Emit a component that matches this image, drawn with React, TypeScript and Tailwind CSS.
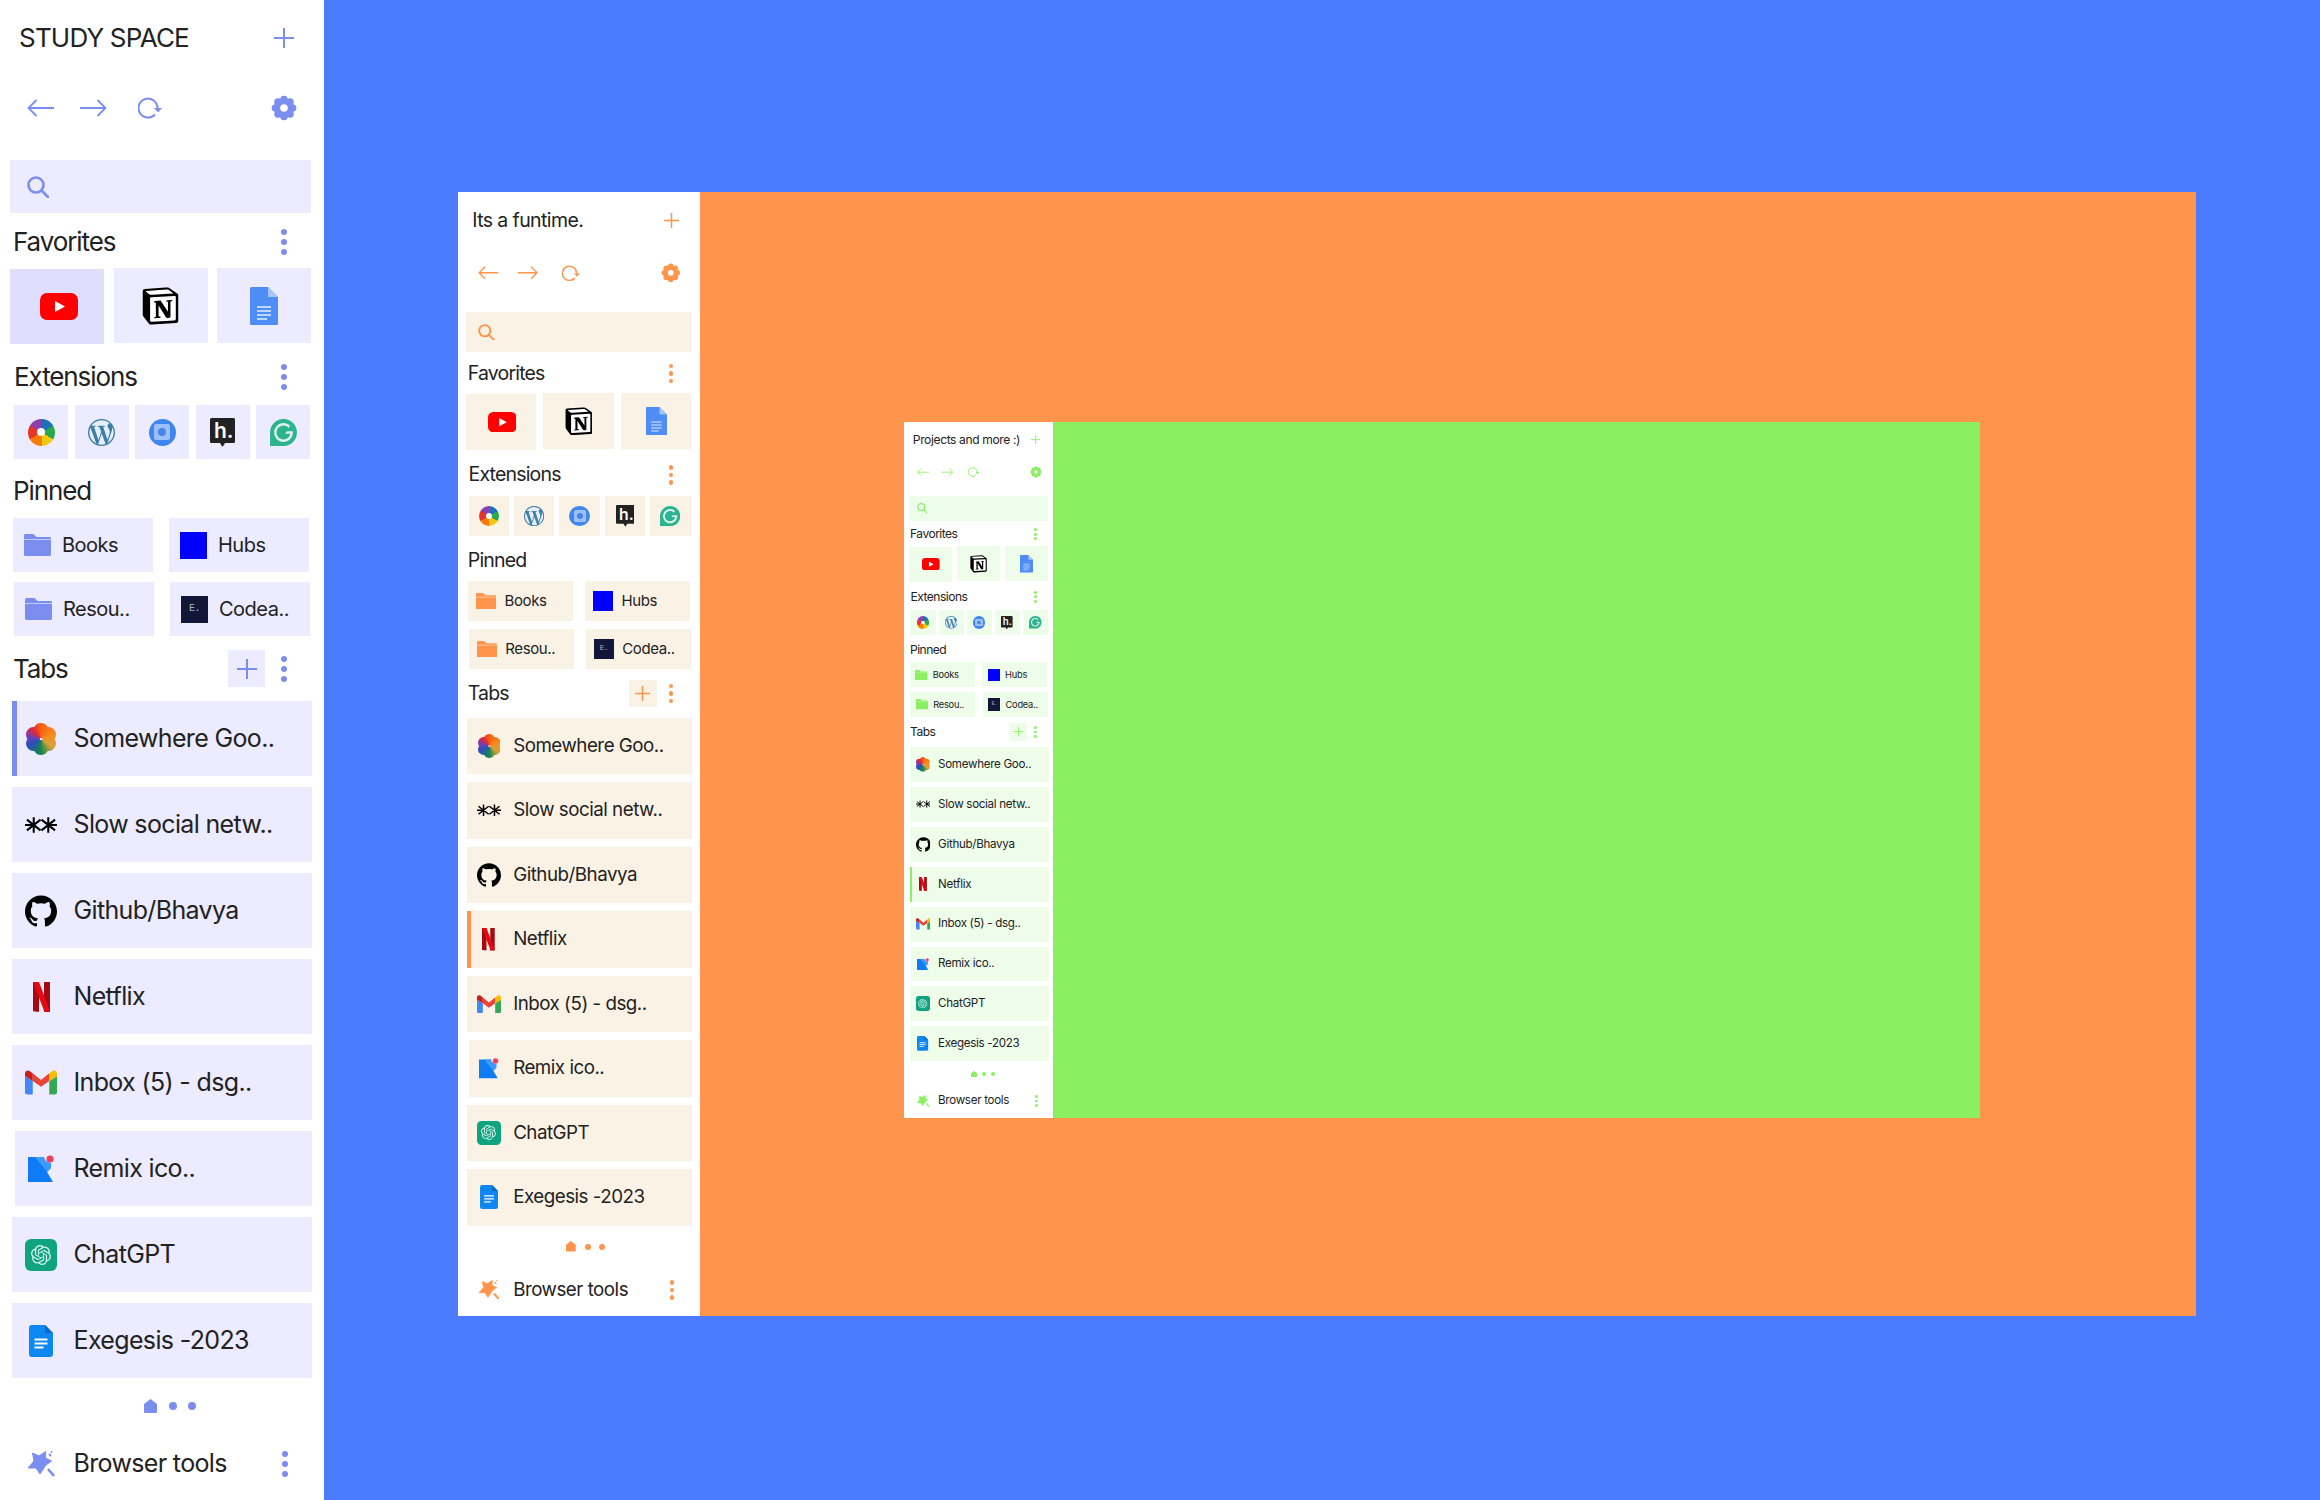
import React from "react";
import { SiGithub, SiGrammarly, SiOpenai, SiWordpress } from "react-icons/si";

type Theme = { accent: string; bar: string; tile: string; activeFav: string };

const blue: Theme = { accent: "text-[#7b8ef0]", bar: "bg-[#7b8ef0]", tile: "bg-[#ecebff]", activeFav: "bg-[#e0deff]" };
const orange: Theme = { accent: "text-[#ff954d]", bar: "bg-[#ff954d]", tile: "bg-[#fbf2e6]", activeFav: "bg-[#fbf2e6]" };
const green: Theme = { accent: "text-[#8af062]", bar: "bg-[#8af062]", tile: "bg-[#eefcea]", activeFav: "bg-[#eefcea]" };

const Plus = () => (
  <svg width="20" height="20" viewBox="0 0 20 20" fill="none" stroke="currentColor" strokeWidth="2">
    <path d="M10 0v20M0 10h20" />
  </svg>
);

const ArrowLeft = () => (
  <svg width="27" height="18" viewBox="0 0 27 18" fill="none" stroke="currentColor" strokeWidth="1.8">
    <path d="M27 9H1.5M9.5 1 1.5 9l8 8" />
  </svg>
);

const ArrowRight = () => (
  <svg width="27" height="18" viewBox="0 0 27 18" fill="none" stroke="currentColor" strokeWidth="1.8">
    <path d="M0 9h25.5M17.5 1l8 8-8 8" />
  </svg>
);

const Refresh = () => (
  <svg width="24" height="22" viewBox="0 0 24 22" fill="none" stroke="currentColor" strokeWidth="2">
    <path d="M17 17.5A9.500 9.500 0 1 1 19.500 11" />
    <path d="M16 11h8l-4 4.500z" fill="currentColor" stroke="none" />
  </svg>
);

const Gear = () => (
  <svg width="26" height="26" viewBox="0 0 26 26">
    <g fill="currentColor">
      <circle cx="13" cy="13" r="9.500" />
      <circle cx="13" cy="4.500" r="3.800" />
      <circle cx="13" cy="21.500" r="3.800" />
      <circle cx="4.500" cy="13" r="3.800" />
      <circle cx="21.500" cy="13" r="3.800" />
      <circle cx="7" cy="7" r="3.800" />
      <circle cx="19" cy="7" r="3.800" />
      <circle cx="7" cy="19" r="3.800" />
      <circle cx="19" cy="19" r="3.800" />
    </g>
    <circle cx="13" cy="13" r="3.800" fill="#fff" />
  </svg>
);

const Search = () => (
  <svg width="22" height="22" viewBox="0 0 22 22" fill="none" stroke="currentColor" strokeWidth="2.600">
    <circle cx="9" cy="9" r="7.500" />
    <path d="m14.500 14.500 6.500 6.500" strokeLinecap="round" />
  </svg>
);

const Dots = ({ theme }: { theme: Theme }) => (
  <div className="flex flex-col gap-[4px]">
    <span className={`block w-[6px] h-[6px] rounded-full ${theme.bar}`} />
    <span className={`block w-[6px] h-[6px] rounded-full ${theme.bar}`} />
    <span className={`block w-[6px] h-[6px] rounded-full ${theme.bar}`} />
  </div>
);

const Youtube = () => (
  <svg width="38" height="27" viewBox="0 0 38 27">
    <rect width="38" height="27" rx="7" fill="#ff0000" />
    <path d="M15 8v11l10-5.500z" fill="#fff" />
  </svg>
);

const Notion = () => (
  <svg width="37" height="38" viewBox="0 0 24 24">
    <path d="M2 2 18 1l5 4v17l-17 1-4-5z" fill="#fff" />
    <path
      fill="#000"
      d="M4.459 4.208c.746.606 1.026.56 2.428.466l13.215-.793c.28 0 .047-.28-.046-.326L17.86 1.968c-.42-.326-.981-.7-2.055-.607L3.01 2.295c-.466.046-.56.28-.374.466zm.793 3.08v13.904c0 .747.373 1.027 1.214.98l14.523-.84c.841-.046.935-.56.935-1.167V6.354c0-.606-.233-.933-.748-.887l-15.177.887c-.56.047-.747.327-.747.933zm14.337.745c.093.42 0 .84-.42.888l-.7.14v10.264c-.608.327-1.168.514-1.635.514-.748 0-.935-.234-1.495-.933l-4.577-7.186v6.952L12.21 19s0 .84-1.168.84l-3.222.186c-.093-.186 0-.653.327-.746l.84-.233V9.854L7.822 9.76c-.094-.42.14-1.026.793-1.073l3.456-.233 4.764 7.279v-6.44l-1.215-.139c-.093-.514.28-.887.747-.933zM1.936 1.035l13.31-.98c1.634-.14 2.055-.047 3.082.7l4.249 2.986c.7.513.934.653.934 1.26v16.378c0 1.026-.373 1.634-1.68 1.726l-15.458.934c-.98.047-1.448-.093-1.962-.747l-3.129-4.06c-.56-.747-.793-1.306-.793-1.96V2.667c0-.839.374-1.54 1.447-1.632z"
    />
  </svg>
);

const DocsLight = () => (
  <svg width="28" height="38" viewBox="0 0 28 38">
    <path d="M1.500 0H18l10 10v26.500a1.500 1.500 0 0 1-1.500 1.500h-25A1.500 1.500 0 0 1 0 36.500v-35A1.500 1.500 0 0 1 1.500 0z" fill="#4e8df5" />
    <path d="M18 0l10 10H18z" fill="#a6c5fa" />
    <path d="M7 20h14M7 24h14M7 28h14M7 32h10" stroke="#fff" strokeWidth="1.300" opacity="0.85" />
  </svg>
);

const Wheel = () => (
  <div className="relative w-[27px] h-[27px] rounded-full bg-[conic-gradient(#1d6fb8_0deg_60deg,#2aa84a_60deg_120deg,#f2c811_120deg_180deg,#f57c00_180deg_240deg,#e5352b_240deg_300deg,#8e3fae_300deg_360deg)] flex items-center justify-center">
    <span className="block w-[8px] h-[8px] rounded-full bg-white" />
  </div>
);

const Wordpress = () => (
  <div className="w-[27px] h-[27px] rounded-full bg-[#e8eef8] flex items-center justify-center">
    <SiWordpress size={27} color="#3b7ea6" />
  </div>
);

const BlueExt = () => (
  <div className="w-[27px] h-[27px] rounded-full bg-[#3f86f0] flex items-center justify-center">
    <div className="w-[16px] h-[16px] rounded-[2px] bg-[#9dbff8] flex items-center justify-center">
      <span className="block w-[8px] h-[8px] rounded-full bg-[#4a82ea]" />
    </div>
  </div>
);

const HubExt = () => (
  <svg width="25" height="29" viewBox="0 0 25 29">
    <path d="M1.500 0h22A1.500 1.500 0 0 1 25 1.500v22a1.500 1.500 0 0 1-1.500 1.500H15l-2.500 4L10 25H1.500A1.500 1.500 0 0 1 0 23.500v-22A1.500 1.500 0 0 1 1.500 0z" fill="#222" />
    <text x="4" y="20" fill="#fff" fontSize="21" fontWeight="600" fontFamily="Inter, sans-serif">h.</text>
  </svg>
);

const Grammarly = () => (
  <div className="w-[27px] h-[27px] rounded-full bg-[#dff3ee] flex items-center justify-center">
    <SiGrammarly size={27} color="#2cb491" />
  </div>
);

const Folder = () => (
  <svg width="27" height="22" viewBox="0 0 27 22">
    <path d="M1.500 0h8l3 3h13A1.500 1.500 0 0 1 27 4.500V20.500a1.500 1.500 0 0 1-1.500 1.500h-24A1.500 1.500 0 0 1 0 20.500v-19A1.500 1.500 0 0 1 1.500 0z" fill="currentColor" />
    <path d="M0 5.500h27" stroke="#fff" strokeOpacity="0.55" strokeWidth="1" />
  </svg>
);

const Codea = () => (
  <div className="w-[27px] h-[27px] bg-[#12173a] flex items-center justify-center">
    <span className="text-[10px] leading-none text-[#aeb2c4] font-['Liberation_Mono',monospace]">E.</span>
  </div>
);

const Flower = () => (
  <svg width="30" height="32" viewBox="0 0 30 32">
    <clipPath id="flower-clip">
      <circle cx="15" cy="7.500" r="7.500" />
      <circle cx="15" cy="24.500" r="7.500" />
      <circle cx="7.500" cy="11.500" r="7.500" />
      <circle cx="22.500" cy="11.500" r="7.500" />
      <circle cx="7.500" cy="20.500" r="7.500" />
      <circle cx="22.500" cy="20.500" r="7.500" />
    </clipPath>
    <g clipPath="url(#flower-clip)">
      <foreignObject x="0" y="0" width="30" height="32">
        <div className="w-[30px] h-[32px] bg-[conic-gradient(#f9600e,#f48c1f_70deg,#d9a23a_125deg,#16864b_180deg,#2a4fbb_240deg,#6b3fb8_280deg,#e3263a_320deg,#f9600e)]" />
      </foreignObject>
    </g>
  </svg>
);

const Stars = () => (
  <svg width="33" height="22" viewBox="0 0 33 22" stroke="#000" strokeWidth="2.100" fill="none">
    <path d="M9 3v16M2 5.500l14 11M2 16.500l14-11M24 3v16M17 5.500l14 11M17 16.500l14-11" />
    <path d="M0 11h9M24 11h9" />
  </svg>
);

const Netflix = () => (
  <svg width="17" height="30" viewBox="0 0 17 30">
    <path d="M0 0h6v30l-6-.8z" fill="#a50a10" />
    <path d="M11 0h6v29.200L11 30z" fill="#a50a10" />
    <path d="M0 0h6l11 29.200V30h-5.500z" fill="#e50914" />
  </svg>
);

const Gmail = () => (
  <svg width="33" height="25" viewBox="0 0 33 25">
    <path d="M0 6v16.500A2.500 2.500 0 0 0 2.500 25H8V11z" fill="#4285f4" />
    <path d="M25 11v14h5.500a2.500 2.500 0 0 0 2.500-2.500V6z" fill="#34a853" />
    <path d="M8 11 16.500 17 25 11V3L16.500 10 8 3z" fill="#ea4335" />
    <path d="M0 6l8 5V3L5 .8C3-.8 0 .5 0 3z" fill="#c5221f" />
    <path d="M25 3v8l8-5V3c0-2.500-3-3.800-5-2.200z" fill="#fbbc04" />
  </svg>
);

const Remix = () => (
  <svg width="26" height="27" viewBox="0 0 26 27">
    <path d="M0 2h16c0 3 3 6 7 6v5l-4 4 6 10H0z" fill="#0f7cf5" />
    <path d="M7 2h9c0 3 3 6 7 6v5l-4 4z" fill="#3b9bff" />
    <circle cx="22" cy="4" r="3.600" fill="#f0405e" />
  </svg>
);

const ChatGpt = () => (
  <div className="w-[32px] h-[32px] rounded-[6px] bg-[#10a37f] flex items-center justify-center">
    <SiOpenai size={20} color="#d6f2ea" />
  </div>
);

const DocsBlue = () => (
  <svg width="24" height="32" viewBox="0 0 24 32">
    <path d="M3 0h13l8 8v21a3 3 0 0 1-3 3H3a3 3 0 0 1-3-3V3a3 3 0 0 1 3-3z" fill="#0f87f2" />
    <path d="M16 0l8 8h-8z" fill="#0a6bc8" />
    <path d="M5.500 14.500h13M5.500 18.500h13M5.500 22.500h9" stroke="#fff" strokeWidth="1.800" />
  </svg>
);

const Sparkle = () => (
  <svg width="27" height="27" viewBox="0 0 27 27" fill="currentColor">
    <path d="M4.500 2 11 5l6.700-4.500L17.500 7l6 3-6 4.500L12 23l-4-6-8 0 6-7z" strokeLinejoin="round" stroke="currentColor" strokeWidth="1" />
    <path d="M20 18l6 7" stroke="currentColor" strokeWidth="2.600" fill="none" />
    <path d="M21 3l2 2M23 .5l1 1" stroke="currentColor" strokeWidth="1.800" fill="none" />
  </svg>
);

const Home = () => (
  <svg width="13" height="14" viewBox="0 0 13 14" fill="currentColor">
    <path d="M6.500 0 13 5v8a1 1 0 0 1-1 1H1a1 1 0 0 1-1-1V5z" />
  </svg>
);

const tabs = [
  { icon: <Flower />, title: "Somewhere Goo.." },
  { icon: <Stars />, title: "Slow social netw.." },
  { icon: <SiGithub size={32} color="#000" />, title: "Github/Bhavya" },
  { icon: <Netflix />, title: "Netflix" },
  { icon: <Gmail />, title: "Inbox (5) - dsg.." },
  { icon: <Remix />, title: "Remix ico.." },
  { icon: <ChatGpt />, title: "ChatGPT" },
  { icon: <DocsBlue />, title: "Exegesis -2023" },
];

const Sidebar = ({ theme, title, activeTab }: { theme: Theme; title: string; activeTab: number }) => {
  return (
    <div className="w-[324px] h-[1500px] bg-white flex flex-col font-['Inter',sans-serif] text-[#222]">
      <div className="h-[76px] pl-[19px] pr-[30px] flex items-center justify-between">
        <h1 className="text-[26px] leading-none tracking-[-0.8px]">{title}</h1>
        <span className={theme.accent}>
          <Plus />
        </span>
      </div>

      <div className={`h-[64px] pl-[27px] pr-[27px] flex items-center ${theme.accent}`}>
        <ArrowLeft />
        <span className="ml-[26px]">
          <ArrowRight />
        </span>
        <span className="ml-[31px]">
          <Refresh />
        </span>
        <span className="ml-auto">
          <Gear />
        </span>
      </div>

      <div className={`mt-[20px] ml-[10px] w-[301px] h-[53px] pl-[17px] flex items-center ${theme.tile} ${theme.accent}`}>
        <Search />
      </div>

      <div className="h-[55px] pt-[3px] pl-[13px] pr-[37px] flex items-center justify-between">
        <h2 className="text-[26px] leading-none tracking-[-1.1px]">Favorites</h2>
        <Dots theme={theme} />
      </div>
      <div className="ml-[10px] w-[301px] flex gap-[9.500px]">
        <div className={`mt-[1px] w-[94px] h-[75px] pl-[3px] flex items-center justify-center ${theme.activeFav}`}>
          <Youtube />
        </div>
        <div className={`w-[94px] h-[75px] flex items-center justify-center ${theme.tile}`}>
          <Notion />
        </div>
        <div className={`w-[94px] h-[75px] flex items-center justify-center ${theme.tile}`}>
          <DocsLight />
        </div>
      </div>

      <div className="h-[61px] pt-[5px] pl-[14px] pr-[37px] flex items-center justify-between">
        <h2 className="text-[26px] leading-none tracking-[-1.1px]">Extensions</h2>
        <Dots theme={theme} />
      </div>
      <div className="ml-[14px] flex gap-[6.500px]">
        {[<Wheel />, <Wordpress />, <BlueExt />, <HubExt />, <Grammarly />].map((icon, i) => (
          <div key={i} className={`w-[54px] h-[54px] flex items-center justify-center ${theme.tile}`}>
            {icon}
          </div>
        ))}
      </div>

      <div className="h-[59px] pt-[5px] pl-[13px] flex items-center">
        <h2 className="text-[26px] leading-none tracking-[-1.1px]">Pinned</h2>
      </div>
      <div className="ml-[13px] flex gap-[16px]">
        <div className={`w-[140px] h-[54px] pl-[11px] flex items-center gap-[11px] text-[20px] tracking-[-0.5px] ${theme.tile}`}>
          <span className={theme.accent}>
            <Folder />
          </span>
          Books
        </div>
        <div className={`w-[140px] h-[54px] pl-[11px] flex items-center gap-[11px] text-[20px] tracking-[-0.5px] ${theme.tile}`}>
          <span className="block w-[27px] h-[27px] bg-[#0000ff]" />
          Hubs
        </div>
      </div>
      <div className="mt-[10px] ml-[14px] flex gap-[16px]">
        <div className={`w-[140px] h-[54px] pl-[11px] flex items-center gap-[11px] text-[20px] tracking-[-0.5px] ${theme.tile}`}>
          <span className={theme.accent}>
            <Folder />
          </span>
          Resou..
        </div>
        <div className={`w-[140px] h-[54px] pl-[11px] flex items-center gap-[11px] text-[20px] tracking-[-0.5px] ${theme.tile}`}>
          <Codea />
          Codea..
        </div>
      </div>

      <div className="h-[65px] pl-[13px] pr-[37px] flex items-center">
        <h2 className="text-[26px] leading-none tracking-[-1.1px]">Tabs</h2>
        <button className={`ml-auto mr-[16px] w-[37px] h-[37px] flex items-center justify-center ${theme.tile} ${theme.accent}`}>
          <Plus />
        </button>
        <Dots theme={theme} />
      </div>

      <div className="flex flex-col gap-[11px]">
        {tabs.map((tab, i) => (
          <div
            key={tab.title}
            className={`relative h-[75px] flex items-center text-[25px] tracking-[-0.65px] ${i === 5 ? "ml-[15px] w-[297px] pl-[10px]" : "ml-[12px] w-[300px] pl-[13px]"} ${theme.tile}`}
          >
            {i === activeTab && <span className={`absolute left-0 top-0 bottom-0 w-[5px] ${theme.bar}`} />}
            <span className="w-[32px] h-[32px] flex items-center justify-center shrink-0">{tab.icon}</span>
            <span className="ml-[16.500px]">{tab.title}</span>
          </div>
        ))}
      </div>

      <div className={`h-[56px] pl-[144px] flex items-center ${theme.accent}`}>
        <Home />
        <span className={`block ml-[12px] w-[8px] h-[8px] rounded-full ${theme.bar}`} />
        <span className={`block ml-[11px] w-[8px] h-[8px] rounded-full ${theme.bar}`} />
      </div>

      <div className="h-[60px] pl-[28px] pr-[36px] flex items-center">
        <span className={theme.accent}>
          <Sparkle />
        </span>
        <span className="ml-[18.500px] text-[25px] tracking-[-0.65px]">Browser tools</span>
        <span className="ml-auto">
          <Dots theme={theme} />
        </span>
      </div>
    </div>
  );
};

export default function App() {
  return (
    <div className="w-[2320px] h-[1500px] flex overflow-hidden bg-[#4b7bff]">
      <Sidebar theme={blue} title="STUDY SPACE" activeTab={0} />
      <div className="pl-[134px] pt-[192px]">
        <div className="w-[1738px] h-[1124px] flex bg-[#ff954d]">
          <div className="w-[242px] h-[1124px] shrink-0 overflow-hidden">
            <div className="[zoom:0.75]">
              <Sidebar theme={orange} title="Its a funtime." activeTab={3} />
            </div>
          </div>
          <div className="pl-[204px] pt-[230px]">
            <div className="w-[1076px] h-[696px] flex bg-[#8af062]">
              <div className="w-[149px] h-[696px] shrink-0 overflow-hidden">
                <div className="[zoom:0.464]">
                  <Sidebar theme={green} title="Projects and more :)" activeTab={3} />
                </div>
              </div>
            </div>
          </div>
        </div>
      </div>
    </div>
  );
}
